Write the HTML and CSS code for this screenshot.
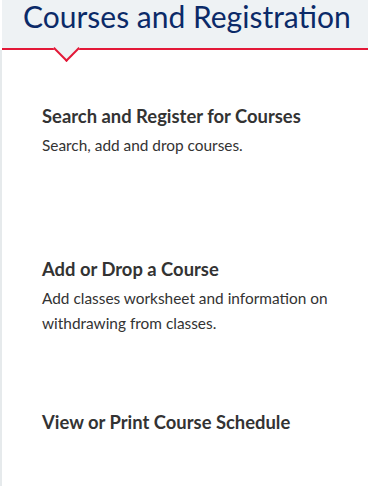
FILE: index.html
```html
<!DOCTYPE html>
<html lang="en">
<head>
<meta charset="utf-8">
<title>Courses and Registration</title>
<link rel="stylesheet" href="styles.css">
</head>
<body>
<header class="page-header">
  <h1 class="page-title">Courses and Registration</h1>
  <span class="chevron" aria-hidden="true"></span>
</header>
<main class="content">
  <ul class="link-list">
    <li class="link-item">
      <h2 class="link-title">Search and Register for Courses</h2>
      <p class="link-desc">Search, add and drop courses.</p>
    </li>
    <li class="link-item">
      <h2 class="link-title">Add or Drop a Course</h2>
      <p class="link-desc">Add classes worksheet and information on withdrawing from classes.</p>
    </li>
    <li class="link-item">
      <h2 class="link-title">View or Print Course Schedule</h2>
    </li>
  </ul>
</main>
</body>
</html>
```

FILE: styles.css
```css
html, body {
  margin: 0;
  padding: 0;
  background: #ffffff;
  font-family: "Lato", "Liberation Sans", sans-serif;
  height: 100%;
  overflow: hidden;
}

.page-header {
  position: relative;
  height: 48px;
  background: #eef2f4;
  border-bottom: 2px solid #e31837;
  margin-left: 2px;
}

.page-title {
  margin: 0;
  padding: 1px 0 0 21px;
  font-weight: 400;
  font-size: 30px;
  line-height: 31px;
  color: #0b2a68;
  white-space: nowrap;
}

.chevron {
  position: absolute;
  left: 55px;
  top: 39px;
  width: 17px;
  height: 17px;
  background: #eef2f4;
  border-right: 2px solid #e31837;
  border-bottom: 2px solid #e31837;
  transform: rotate(45deg);
}

.content {
  border-left: 2px solid #e6eaec;
  height: 436px;
  box-sizing: border-box;
  padding: 54px 16px 0 40px;
}

.link-list {
  list-style: none;
  margin: 0;
  padding: 0;
}

.link-item {
  height: 153px;
}

.link-item:last-child {
  height: auto;
}

.link-title {
  margin: 0;
  font-size: 18.4px;
  line-height: 24px;
  font-weight: 700;
  color: #333333;
}

.link-desc {
  margin: 5px 0 0;
  font-size: 15.4px;
  line-height: 25px;
  color: #333333;
}
```
